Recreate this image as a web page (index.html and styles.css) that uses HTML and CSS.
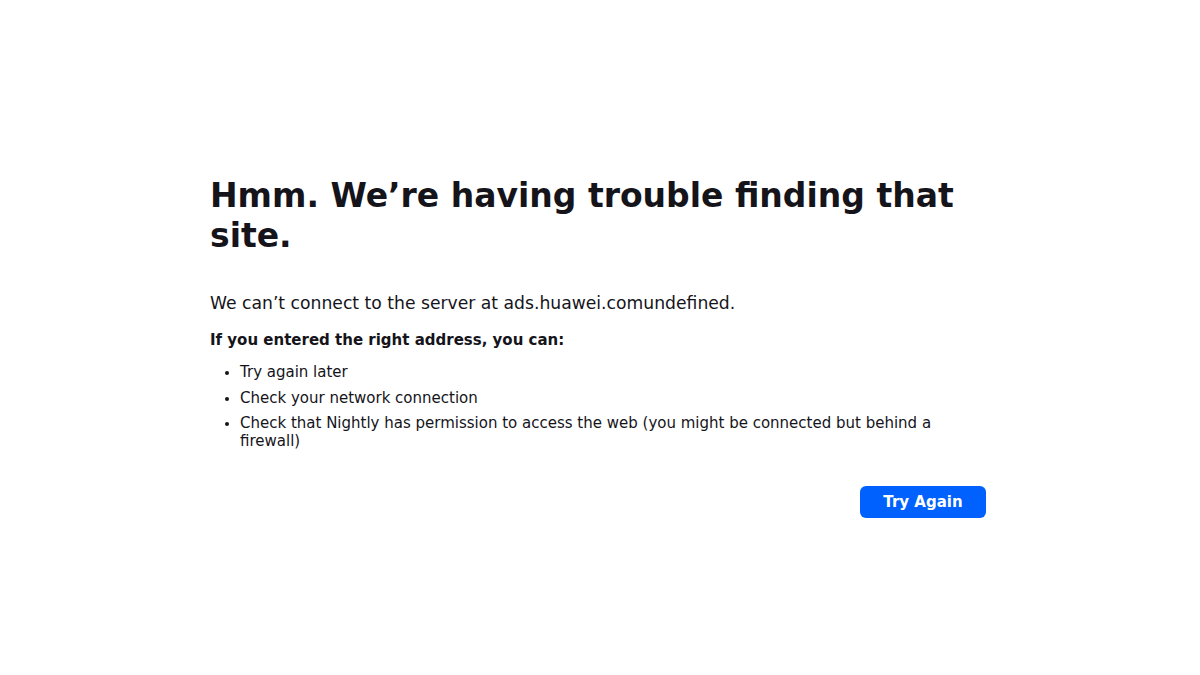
FILE: index.html
```html
<!DOCTYPE html>
<html lang="en">
<head>
<meta charset="utf-8">
<title>Server Not Found</title>
<link rel="stylesheet" href="styles.css">
</head>
<body>
<main class="page">
  <div class="container">
    <h1 class="title">Hmm. We’re having trouble finding that site.</h1>
    <p class="intro">We can’t connect to the server at ads.huawei.comundefined.</p>
    <p class="lead"><strong>If you entered the right address, you can:</strong></p>
    <ul class="tips">
      <li>Try again later</li>
      <li>Check your network connection</li>
      <li>Check that Nightly has permission to access the web (you might be connected but behind a firewall)</li>
    </ul>
    <div class="actions">
      <button class="btn-primary" type="button">Try Again</button>
    </div>
  </div>
</main>
</body>
</html>
```

FILE: styles.css
```css
html, body {
  margin: 0;
  padding: 0;
  background: #ffffff;
}
body {
  font-family: "DejaVu Sans", sans-serif;
  color: #15141a;
  font-size: 15px;
}
.page {
  padding: 176px 214px 0 210px;
}
.container {
  width: 776px;
}
.title {
  margin: 0;
  font-size: 33px;
  line-height: 40px;
  font-weight: 700;
}
.intro {
  margin: 36px 0 0;
  font-size: 17.2px;
  line-height: 22px;
}
.lead {
  margin: 16px 0 0;
  font-size: 15px;
  line-height: 20px;
}
.tips {
  margin: 13px 0 0;
  padding-left: 30px;
  font-size: 15px;
  line-height: 18px;
}
.tips li {
  margin-bottom: 7.5px;
}
.tips li::marker {
  font-size: 14px;
}
.actions {
  display: flex;
  justify-content: flex-end;
  margin-top: 36px;
}
.btn-primary {
  width: 126px;
  height: 32px;
  border: none;
  border-radius: 6px;
  background: #0061ff;
  color: #ffffff;
  font-family: "DejaVu Sans", sans-serif;
  font-weight: 700;
  font-size: 15px;
  padding: 0;
}
```
